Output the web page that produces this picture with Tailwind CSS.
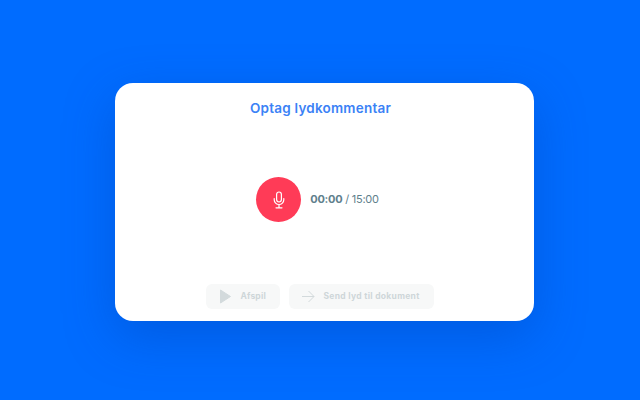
<!DOCTYPE html>
<html><head><meta charset="utf-8"><script src="https://cdn.jsdelivr.net/npm/@tailwindcss/browser@4"></script></head>
<body class="m-0">
<div class="w-[640px] h-[400px] overflow-hidden bg-[#006cff] flex items-start pt-[83px] pl-[115px] font-['Inter','Liberation_Sans',sans-serif]">
  <div class="w-[419px] h-[238px] bg-white rounded-[18px] shadow-[0_16px_50px_rgba(0,60,170,0.35)] flex flex-col items-center pr-[8px]">
    <h1 class="mt-[17px] text-[13.5px] leading-[16px] font-semibold text-[#3b82f6] tracking-[0.22px]">Optag lydkommentar</h1>
    <div class="mt-[61px] flex items-center gap-[9px] mr-[6px]">
      <div class="w-[45px] h-[45px] rounded-full bg-[#ff3b57] flex items-center justify-center">
        <svg width="16" height="18" viewBox="0 0 16 18" fill="none" stroke="#fff" stroke-width="1.2" stroke-linecap="round"><rect x="5.6" y="1" width="4.8" height="10" rx="2.4"/><path d="M3.2 7.5v1.2a4.8 4.8 0 0 0 9.6 0V7.5M8 13.5V16.6M5 16.8h6"/></svg>
      </div>
      <div class="text-[11px] text-[#60808c] tracking-[-0.25px]"><span class="font-bold">00:00</span> / 15:00</div>
    </div>
    <div class="mt-[62px] flex gap-[9px] mr-[2px]">
      <div class="w-[74px] h-[25px] rounded-[6px] bg-[#f7f8f8] flex items-center pl-[14px] gap-[10px] text-[8.5px] font-bold text-[#ced6d9] tracking-[0.2px]">
        <svg width="11" height="15" viewBox="0 0 11 15"><path d="M0.5 1v13L10.5 7.5z" fill="#d3dadc" stroke="#d3dadc" stroke-width="1"/></svg>Afspil
      </div>
      <div class="w-[145px] h-[25px] rounded-[6px] bg-[#f7f8f8] flex items-center pl-[13px] gap-[9px] text-[8.5px] font-bold text-[#ced6d9] tracking-[0.3px]">
        <svg width="13" height="13" viewBox="0 0 13 13" fill="none" stroke="#d3dadc" stroke-width="1"><path d="M0 6.5h12M6.5 1l5.5 5.5-5.5 5.5"/></svg>Send lyd til dokument
      </div>
    </div>
  </div>
</div>
</body></html>
